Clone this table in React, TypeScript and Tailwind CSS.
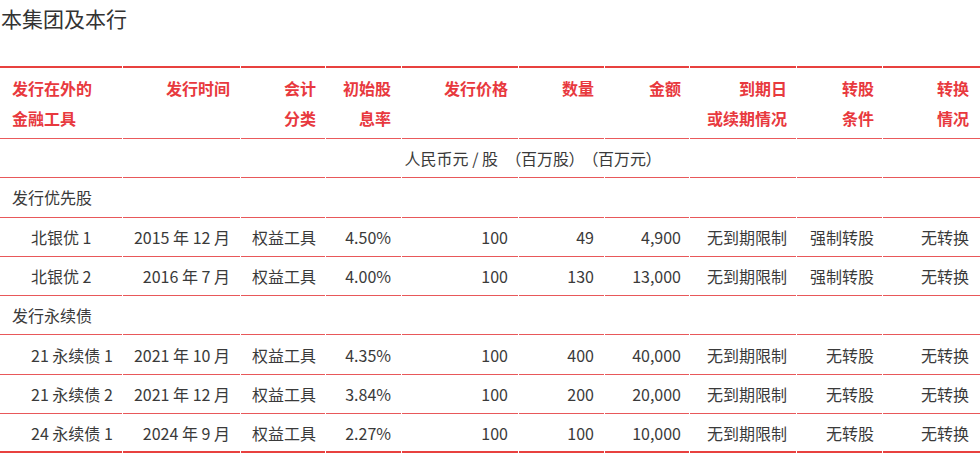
import React from "react";

const cols = "grid grid-cols-[122px_117px_84px_75px_116px_85px_84px_106px_85px_97px] gap-x-px";
const font = { fontFamily: '"Noto Sans CJK SC", "Noto Sans", sans-serif' };

type Row = string[];

const pr = [
  "pl-[12px]",
  "pr-[10px]",
  "pr-[9px]",
  "pr-[10px]",
  "pr-[10px]",
  "pr-[10px]",
  "pr-[8px]",
  "pr-[9px]",
  "pr-[8px]",
  "pr-[11px]",
];

const header: [string, string][] = [
  ["发行在外的", "金融工具"],
  ["发行时间", ""],
  ["会计", "分类"],
  ["初始股", "息率"],
  ["发行价格", ""],
  ["数量", ""],
  ["金额", ""],
  ["到期日", "或续期情况"],
  ["转股", "条件"],
  ["转换", "情况"],
];

const pref: Row[] = [
  ["北银优 1", "2015 年 12 月", "权益工具", "4.50%", "100", "49", "4,900", "无到期限制", "强制转股", "无转换"],
  ["北银优 2", "2016 年 7 月", "权益工具", "4.00%", "100", "130", "13,000", "无到期限制", "强制转股", "无转换"],
];

const perp: Row[] = [
  ["21 永续债 1", "2021 年 10 月", "权益工具", "4.35%", "100", "400", "40,000", "无到期限制", "无转股", "无转换"],
  ["21 永续债 2", "2021 年 12 月", "权益工具", "3.84%", "100", "200", "20,000", "无到期限制", "无转股", "无转换"],
  ["24 永续债 1", "2024 年 9 月", "权益工具", "2.27%", "100", "100", "10,000", "无到期限制", "无转股", "无转换"],
];

function DataRow({ r, last }: { r: Row; last?: boolean }) {
  return (
    <div className={cols}>
      {r.map((c, i) => (
        <div
          key={i}
          className={
            "h-[39.3px] flex items-center whitespace-nowrap " +
            (last ? "border-b-2 border-[#e8413f] " : "border-b border-[#e8585a] ") +
            (i === 0 ? "pl-[31px] justify-start" : "justify-end " + pr[i])
          }
        >
          {c}
        </div>
      ))}
    </div>
  );
}

function SectionRow({ label }: { label: string }) {
  return (
    <div className={cols}>
      {Array.from({ length: 10 }).map((_, i) => (
        <div key={i} className="h-[39.3px] flex items-center whitespace-nowrap border-b border-[#e8585a] pl-[12px]">
          {i === 0 ? label : null}
        </div>
      ))}
    </div>
  );
}

export default function App() {
  const units = ["", "", "", "", "人民币元 / 股", "（百万股）", "（百万元）", "", "", ""];
  const unitPr = ["", "", "", "", "pr-[20px]", "pr-[27px]", "pr-[35px]", "", "", ""];
  return (
    <div className="w-[980px] h-[457px] bg-white text-[#3a3a3a] overflow-hidden" style={font}>
      <div className="text-[21px] leading-[36px] pl-px text-[#333333]">本集团及本行</div>
      <div className="mt-[30px] text-[16px]">
        <div className={cols}>
          {header.map(([a, b], i) => (
            <div
              key={i}
              className={
                "border-t-2 border-b border-[#e8413f] border-b-[#ea5a5c] py-[5px] leading-[30px] font-bold text-[#e8393e] whitespace-nowrap flex flex-col " +
                (i === 0 ? "items-start " : "items-end ") +
                pr[i]
              }
            >
              <span>{a}</span>
              <span>{b || "\u00a0"}</span>
            </div>
          ))}
        </div>
        <div className={cols}>
          {units.map((u, i) => (
            <div
              key={i}
              className={
                "h-[39.3px] flex items-center justify-end whitespace-nowrap border-b border-[#e8585a] [font-feature-settings:'palt'] " +
                (unitPr[i] || "pr-[11px]")
              }
            >
              {u}
            </div>
          ))}
        </div>
        <SectionRow label="发行优先股" />
        {pref.map((r, i) => (
          <DataRow key={i} r={r} />
        ))}
        <SectionRow label="发行永续债" />
        {perp.map((r, i) => (
          <DataRow key={i} r={r} last={i === perp.length - 1} />
        ))}
      </div>
    </div>
  );
}
